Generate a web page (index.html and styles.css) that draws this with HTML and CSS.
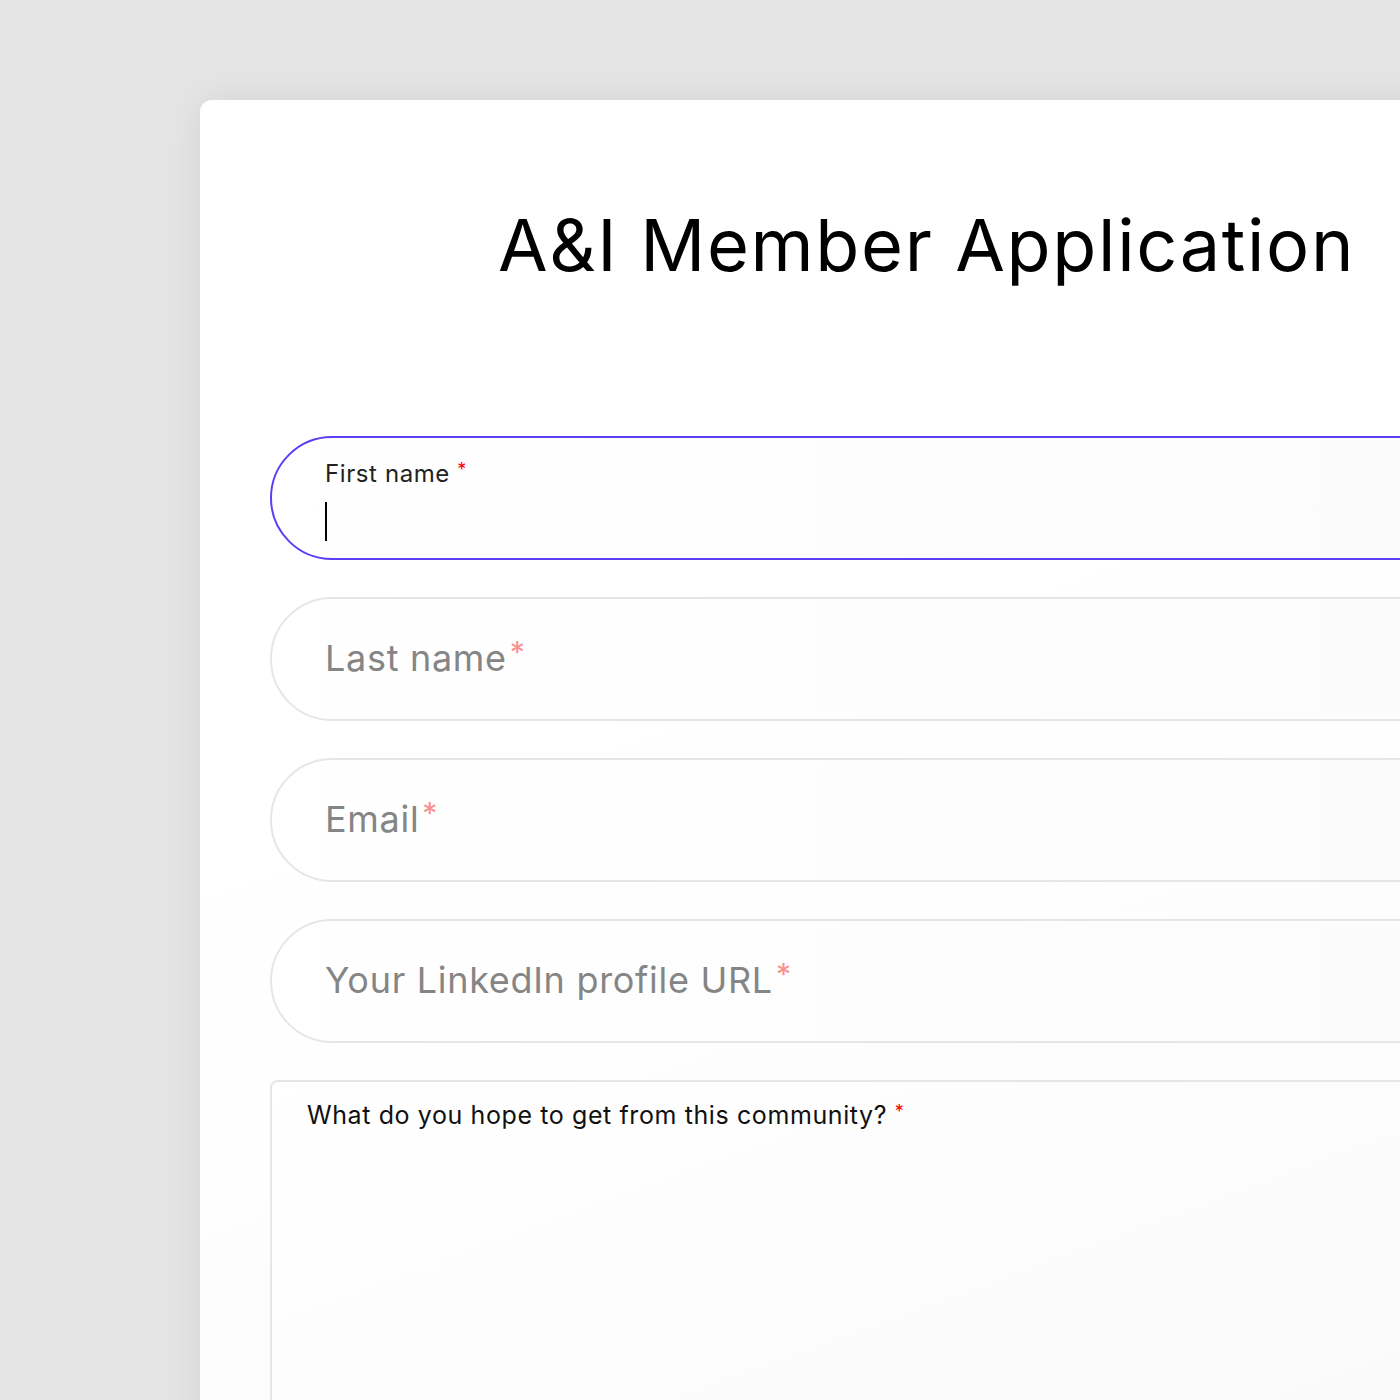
FILE: index.html
```html
<!DOCTYPE html>
<html lang="en">
<head>
    <meta charset="UTF-8">
    <meta name="viewport" content="width=device-width, initial-scale=1.0">
    <title>A&amp;I Member Application</title>
    <link rel="stylesheet" href="styles.css">
</head>
<body>
    <div class="card">
        <h1 class="title">A&amp;I Member Application</h1>

        <form class="form">
            <div class="field field-focus">
                <label class="field-label">First name <span class="req">*</span></label>
                <span class="caret"></span>
            </div>
            <div class="field">
                <span class="placeholder">Last name<span class="req-soft">*</span></span>
            </div>
            <div class="field">
                <span class="placeholder">Email<span class="req-soft">*</span></span>
            </div>
            <div class="field">
                <span class="placeholder">Your LinkedIn profile URL<span class="req-soft">*</span></span>
            </div>
            <div class="area">
                <label class="area-label">What do you hope to get from this community? <span class="req">*</span></label>
            </div>
        </form>
    </div>
</body>
</html>
```

FILE: styles.css
```css
html, body {
    margin: 0;
    height: 100%;
    overflow: hidden;
}
body {
    font-family: Inter, "Open Sans", sans-serif;
    background-color: #e5e5e5;
    padding: 100px 0 0 200px;
    box-sizing: border-box;
}
.card {
    width: 1400px;
    min-height: 1400px;
    background: linear-gradient(160deg, #ffffff 40%, #fafafa 100%);
    border-radius: 12px 0 0 0;
    box-shadow: 0 0 40px rgba(0, 0, 0, 0.08);
    padding: 96px 0 0 70px;
    box-sizing: border-box;
}
.title {
    margin: 0 0 142px 228px;
    font-size: 72px;
    font-weight: 400;
    letter-spacing: 1.65px;
    line-height: 98px;
    color: #000;
}
.form {
    display: flex;
    flex-direction: column;
    gap: 37px;
}
.field {
    height: 124px;
    border: 2px solid #e6e6e6;
    border-radius: 62px;
    box-sizing: border-box;
    padding: 0 0 0 53px;
    display: flex;
    flex-direction: column;
    justify-content: center;
    background: linear-gradient(90deg, #ffffff 0%, #fbfbfb 100%);
}
.field-focus {
    border-color: #5b3ff6;
    justify-content: flex-start;
    padding-top: 14px;
}
.field-label {
    font-size: 24px;
    color: #222;
    line-height: 36px;
    letter-spacing: 0.6px;
}
.req {
    color: #f00;
    font-size: 18px;
    vertical-align: 6px;
}
.caret {
    display: block;
    width: 2px;
    height: 39px;
    margin-top: 10px;
    background-color: #000;
}
.placeholder {
    font-size: 36px;
    color: #858585;
    letter-spacing: 0.7px;
    margin-top: -4px;
}
.req-soft {
    color: #fb8f8f;
    font-size: 30px;
    vertical-align: 8px;
    margin-left: 3px;
}
.area {
    height: 400px;
    border: 2px solid #e6e6e6;
    border-radius: 8px;
    padding: 18px 0 0 35px;
    box-sizing: border-box;
    background: linear-gradient(160deg, #ffffff 0%, #f9f9f9 100%);
}
.area-label {
    font-size: 25px;
    color: #111;
    letter-spacing: 0.6px;
}
```
